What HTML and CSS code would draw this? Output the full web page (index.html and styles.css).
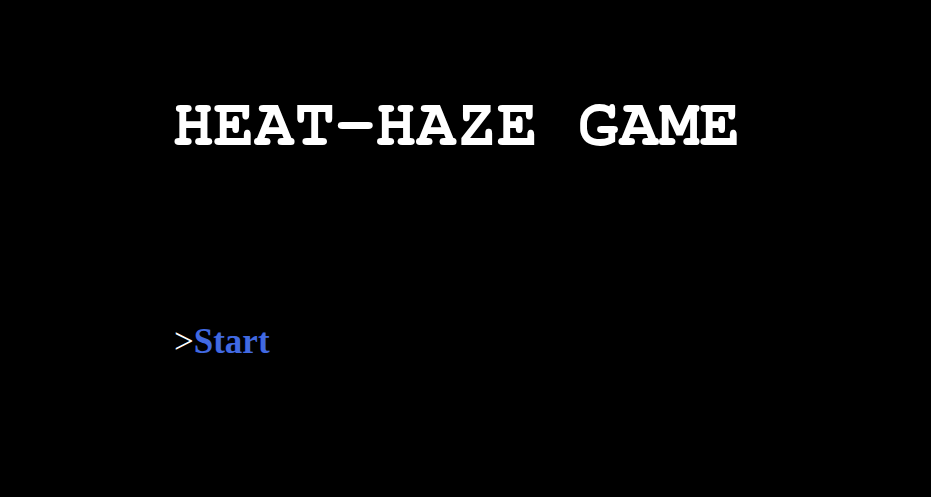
FILE: index.html
```html
<!DOCTYPE html>
<html>
<head>
<meta charset="utf-8">
<link rel="stylesheet" href="styles.css">
</head>
<body>
<div class="screen">
  <h1 class="title">HEAT-HAZE GAME</h1>
  <div class="menu">
    <div class="menu-item"><span class="cursor">&gt;</span><span class="label">Start</span></div>
  </div>
</div>
</body>
</html>
```
FILE: styles.css
```css
html, body {
  margin: 0;
  padding: 0;
  background: #000;
  width: 931px;
  height: 497px;
  overflow: hidden;
}
.screen {
  display: flex;
  flex-direction: column;
  padding: 85px 0 0 173px;
}
.title {
  margin: 0;
  font-family: "FreeMono", "Courier New", monospace;
  font-weight: bold;
  font-size: 67.5px;
  line-height: 80px;
  color: #fff;
}
.menu {
  margin-top: 157px;
  padding-left: 1px;
}
.menu-item {
  font-family: "Liberation Serif", "Times New Roman", serif;
  font-size: 35px;
  line-height: 40px;
}
.cursor {
  color: #fff;
}
.label {
  color: #4169e1;
  font-weight: bold;
}
```
